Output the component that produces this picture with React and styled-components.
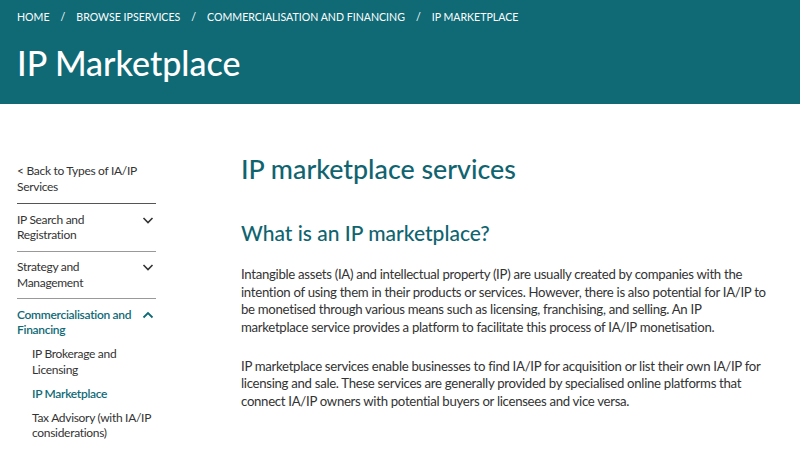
import React from "react";
import styled, { createGlobalStyle } from "styled-components";

const GlobalStyle = createGlobalStyle`
  html, body {
    margin: 0;
    padding: 0;
    background: #ffffff;
    font-family: "Lato", "Noto Sans", sans-serif;
    color: #333333;
  }
`;

const Banner = styled.header`
  background: #0f6a76;
  height: 104px;
  box-sizing: border-box;
  padding: 9px 17px 0;
  color: #ffffff;
`;

const Crumbs = styled.nav`
  display: flex;
  align-items: center;
  gap: 10px;
  font-size: 10.6px;
  text-transform: uppercase;
  line-height: 16px;
`;

const Slash = styled.span`
  padding: 0 1px;
`;

const PageTitle = styled.h1`
  margin: 18px 0 0;
  font-size: 34px;
  font-weight: 500;
  line-height: 40px;
`;

const Body = styled.div`
  display: flex;
  padding: 54px 17px 0;
`;

const Sidebar = styled.aside`
  width: 139px;
  flex-shrink: 0;
  font-size: 12px;
  letter-spacing: -0.3px;
  line-height: 15.5px;
`;

const BackLink = styled.div`
  padding: 5px 0 9px;
  border-bottom: 1.5px solid #555;
`;

const Group = styled.div`
  border-bottom: ${(p) => (p.$last ? "none" : "1px solid #999")};
  padding: 7.5px 0 8px;
`;

const GroupHead = styled.div`
  display: flex;
  justify-content: space-between;
  align-items: flex-start;
  gap: 6px;
  color: ${(p) => (p.$active ? "#0f6a76" : "#333")};
  font-weight: ${(p) => (p.$active ? 600 : 400)};
`;

const Chevron = styled.svg`
  width: 12px;
  height: 12px;
  margin-top: 2px;
  margin-right: 2px;
  flex-shrink: 0;
`;

const SubList = styled.div`
  padding: 8.5px 0 0 15px;
  display: flex;
  flex-direction: column;
  gap: 8.5px;
`;

const SubItem = styled.div`
  color: ${(p) => (p.$active ? "#0f6a76" : "#333")};
  font-weight: ${(p) => (p.$active ? 600 : 400)};
`;

const Main = styled.main`
  margin-left: 85px;
  flex: 1;
`;

const Heading = styled.h2`
  margin: 0;
  color: #0f6470;
  font-size: 26.8px;
  font-weight: 500;
  line-height: 22px;
`;

const SubHeading = styled.h3`
  margin: 40px 0 0;
  color: #0f6470;
  font-size: 21px;
  font-weight: 500;
  line-height: 26px;
`;

const Para = styled.p`
  margin: ${(p) => (p.$first ? "20px" : "21.4px")} 0 0;
  font-size: 13.2px;
  letter-spacing: -0.3px;
  line-height: 17.6px;
  color: #333;
`;

const Down = () => (
  <Chevron viewBox="0 0 12 12">
    <path d="M1.5 4 L6 8.5 L10.5 4" fill="none" stroke="#333" strokeWidth="1.6" />
  </Chevron>
);

const Up = () => (
  <Chevron viewBox="0 0 12 12">
    <path d="M1.5 8.5 L6 4 L10.5 8.5" fill="none" stroke="#0f6a76" strokeWidth="1.8" />
  </Chevron>
);

const crumbs = ["Home", "Browse IPServices", "Commercialisation and Financing", "IP Marketplace"];

export default function App() {
  return (
    <>
      <GlobalStyle />
      <Banner>
        <Crumbs>
          {crumbs.map((c, i) => (
            <React.Fragment key={c}>
              {i > 0 && <Slash>/</Slash>}
              <span>{c}</span>
            </React.Fragment>
          ))}
        </Crumbs>
        <PageTitle>IP Marketplace</PageTitle>
      </Banner>
      <Body>
        <Sidebar>
          <BackLink>&lt; Back to Types of IA/IP<br />Services</BackLink>
          <Group>
            <GroupHead>
              <span>IP Search and<br />Registration</span>
              <Down />
            </GroupHead>
          </Group>
          <Group>
            <GroupHead>
              <span>Strategy and<br />Management</span>
              <Down />
            </GroupHead>
          </Group>
          <Group $last>
            <GroupHead $active>
              <span>Commercialisation and<br />Financing</span>
              <Up />
            </GroupHead>
            <SubList>
              <SubItem>IP Brokerage and<br />Licensing</SubItem>
              <SubItem $active>IP Marketplace</SubItem>
              <SubItem>Tax Advisory (with IA/IP<br />considerations)</SubItem>
            </SubList>
          </Group>
        </Sidebar>
        <Main>
          <Heading>IP marketplace services</Heading>
          <SubHeading>What is an IP marketplace?</SubHeading>
          <Para $first>
            Intangible assets (IA) and intellectual property (IP) are usually created by companies with the<br />
            intention of using them in their products or services. However, there is also potential for IA/IP to<br />
            be monetised through various means such as licensing, franchising, and selling. An IP<br />
            marketplace service provides a platform to facilitate this process of IA/IP monetisation.
          </Para>
          <Para>
            IP marketplace services enable businesses to find IA/IP for acquisition or list their own IA/IP for<br />
            licensing and sale. These services are generally provided by specialised online platforms that<br />
            connect IA/IP owners with potential buyers or licensees and vice versa.
          </Para>
        </Main>
      </Body>
    </>
  );
}
